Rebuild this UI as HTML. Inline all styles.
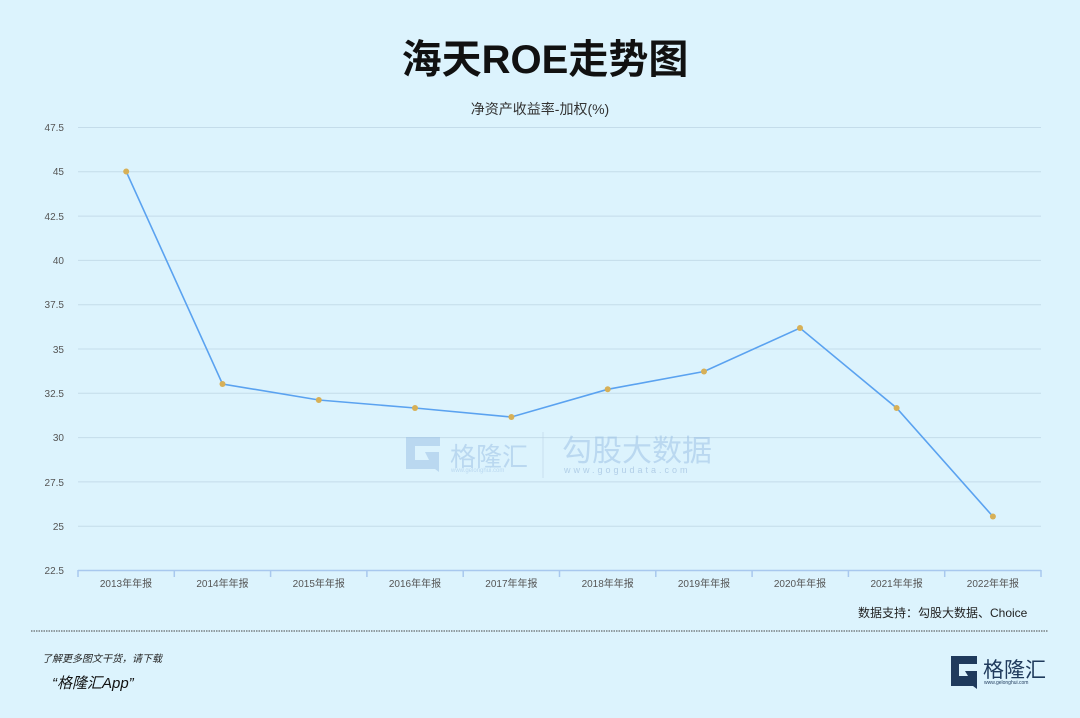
<!DOCTYPE html>
<html><head><meta charset="utf-8"><style>
html,body{margin:0;padding:0;}
body{width:1080px;height:718px;background:#dcf3fd;position:relative;overflow:hidden;font-family:"Liberation Sans","Noto Sans CJK SC",sans-serif;}
.t{position:absolute;white-space:nowrap;}
</style></head><body>
<div class="t" style="left:0;width:1090px;text-align:center;top:27px;font-size:40px;font-weight:bold;color:#111;">海天ROE走势图</div>
<div class="t" style="left:0;width:1080px;text-align:center;top:99px;font-size:14px;color:#333;">净资产收益率-加权(%)</div>
<svg width="1080" height="718" style="position:absolute;left:0;top:0" font-family="Liberation Sans, Noto Sans CJK SC, sans-serif">
<g stroke="#c4dcea" stroke-width="1">
<line x1="78" x2="1041" y1="127.5" y2="127.5"/><line x1="78" x2="1041" y1="171.8" y2="171.8"/>
<line x1="78" x2="1041" y1="216.1" y2="216.1"/><line x1="78" x2="1041" y1="260.4" y2="260.4"/>
<line x1="78" x2="1041" y1="304.7" y2="304.7"/><line x1="78" x2="1041" y1="349" y2="349"/>
<line x1="78" x2="1041" y1="393.3" y2="393.3"/><line x1="78" x2="1041" y1="437.6" y2="437.6"/>
<line x1="78" x2="1041" y1="481.9" y2="481.9"/><line x1="78" x2="1041" y1="526.2" y2="526.2"/>
</g>
<g stroke="#a8c8ee" stroke-width="1.5"><line x1="78" x2="1041" y1="570.5" y2="570.5"/>
<line x1="78" x2="78" y1="570" y2="577"/><line x1="174.3" x2="174.3" y1="570" y2="577"/><line x1="270.6" x2="270.6" y1="570" y2="577"/><line x1="366.9" x2="366.9" y1="570" y2="577"/><line x1="463.2" x2="463.2" y1="570" y2="577"/><line x1="559.5" x2="559.5" y1="570" y2="577"/><line x1="655.8" x2="655.8" y1="570" y2="577"/><line x1="752.1" x2="752.1" y1="570" y2="577"/><line x1="848.4" x2="848.4" y1="570" y2="577"/><line x1="944.7" x2="944.7" y1="570" y2="577"/><line x1="1041" x2="1041" y1="570" y2="577"/></g>
<g font-size="10" fill="#555" text-anchor="end">
<text x="64" y="131">47.5</text><text x="64" y="175">45</text><text x="64" y="220">42.5</text><text x="64" y="264">40</text><text x="64" y="308">37.5</text><text x="64" y="353">35</text><text x="64" y="397">32.5</text><text x="64" y="441">30</text><text x="64" y="486">27.5</text><text x="64" y="530">25</text><text x="64" y="574">22.5</text>
</g>
<g font-size="10" fill="#555" text-anchor="middle">
<text x="126" y="587">2013年年报</text><text x="222.5" y="587">2014年年报</text><text x="318.8" y="587">2015年年报</text><text x="415" y="587">2016年年报</text><text x="511.4" y="587">2017年年报</text><text x="607.7" y="587">2018年年报</text><text x="704" y="587">2019年年报</text><text x="800" y="587">2020年年报</text><text x="896.6" y="587">2021年年报</text><text x="992.9" y="587">2022年年报</text>
</g>
<g opacity="0.55">
<path d="M406 437 h34 v9 h-25 v14 h14 l-4 -8 h14 v20 l-4 -3 h-29 z" fill="#9fc3e6"/>
<text x="450" y="466" font-size="26" fill="#9fc3e6">格隆汇</text>
<text x="451" y="472" font-size="6" fill="#9fc3e6">www.gelonghui.com</text>
<line x1="543" x2="543" y1="432" y2="478" stroke="#b8d0e4"/>
<text x="562" y="461" font-size="30" fill="#9fc3e6">勾股大数据</text>
<text x="564" y="473" font-size="9" fill="#8fb0d6" letter-spacing="3">www.gogudata.com</text>
</g>
<polyline fill="none" stroke="#5aa2f0" stroke-width="1.6" points="126.2,171.5 222.5,384 318.8,400 415,408 511.4,417 607.7,389.3 704,371.5 800,328 896.6,408 992.9,516.5"/>
<g fill="#d7b057">
<circle cx="126.2" cy="171.5" r="3"/><circle cx="222.5" cy="384" r="3"/><circle cx="318.8" cy="400" r="3"/><circle cx="415" cy="408" r="3"/><circle cx="511.4" cy="417" r="3"/><circle cx="607.7" cy="389.3" r="3"/><circle cx="704" cy="371.5" r="3"/><circle cx="800" cy="328" r="3"/><circle cx="896.6" cy="408" r="3"/><circle cx="992.9" cy="516.5" r="3"/>
</g>
<line x1="31" x2="1048" y1="631" y2="631" stroke="#444" stroke-width="1" stroke-dasharray="1.5,1"/>
<path d="M951 656 h26 v8 h-18 v12 h9 l-3 -5 h12 v18 l-4 -3 h-22 z" fill="#1f3a5c"/>
<text x="983" y="677" font-size="21" fill="#1f3a5c">格隆汇</text>
<text x="984" y="684" font-size="5" fill="#1f3a5c">www.gelonghui.com</text>
</svg>
<div class="t" style="left:858px;top:604px;font-size:12px;color:#222;">数据支持：勾股大数据、Choice</div>
<div class="t" style="left:42px;top:650px;font-size:10px;color:#222;font-style:italic;">了解更多图文干货，请下载</div>
<div class="t" style="left:52px;top:672px;font-size:15px;color:#111;font-style:italic;">“格隆汇App”</div>
</body></html>
